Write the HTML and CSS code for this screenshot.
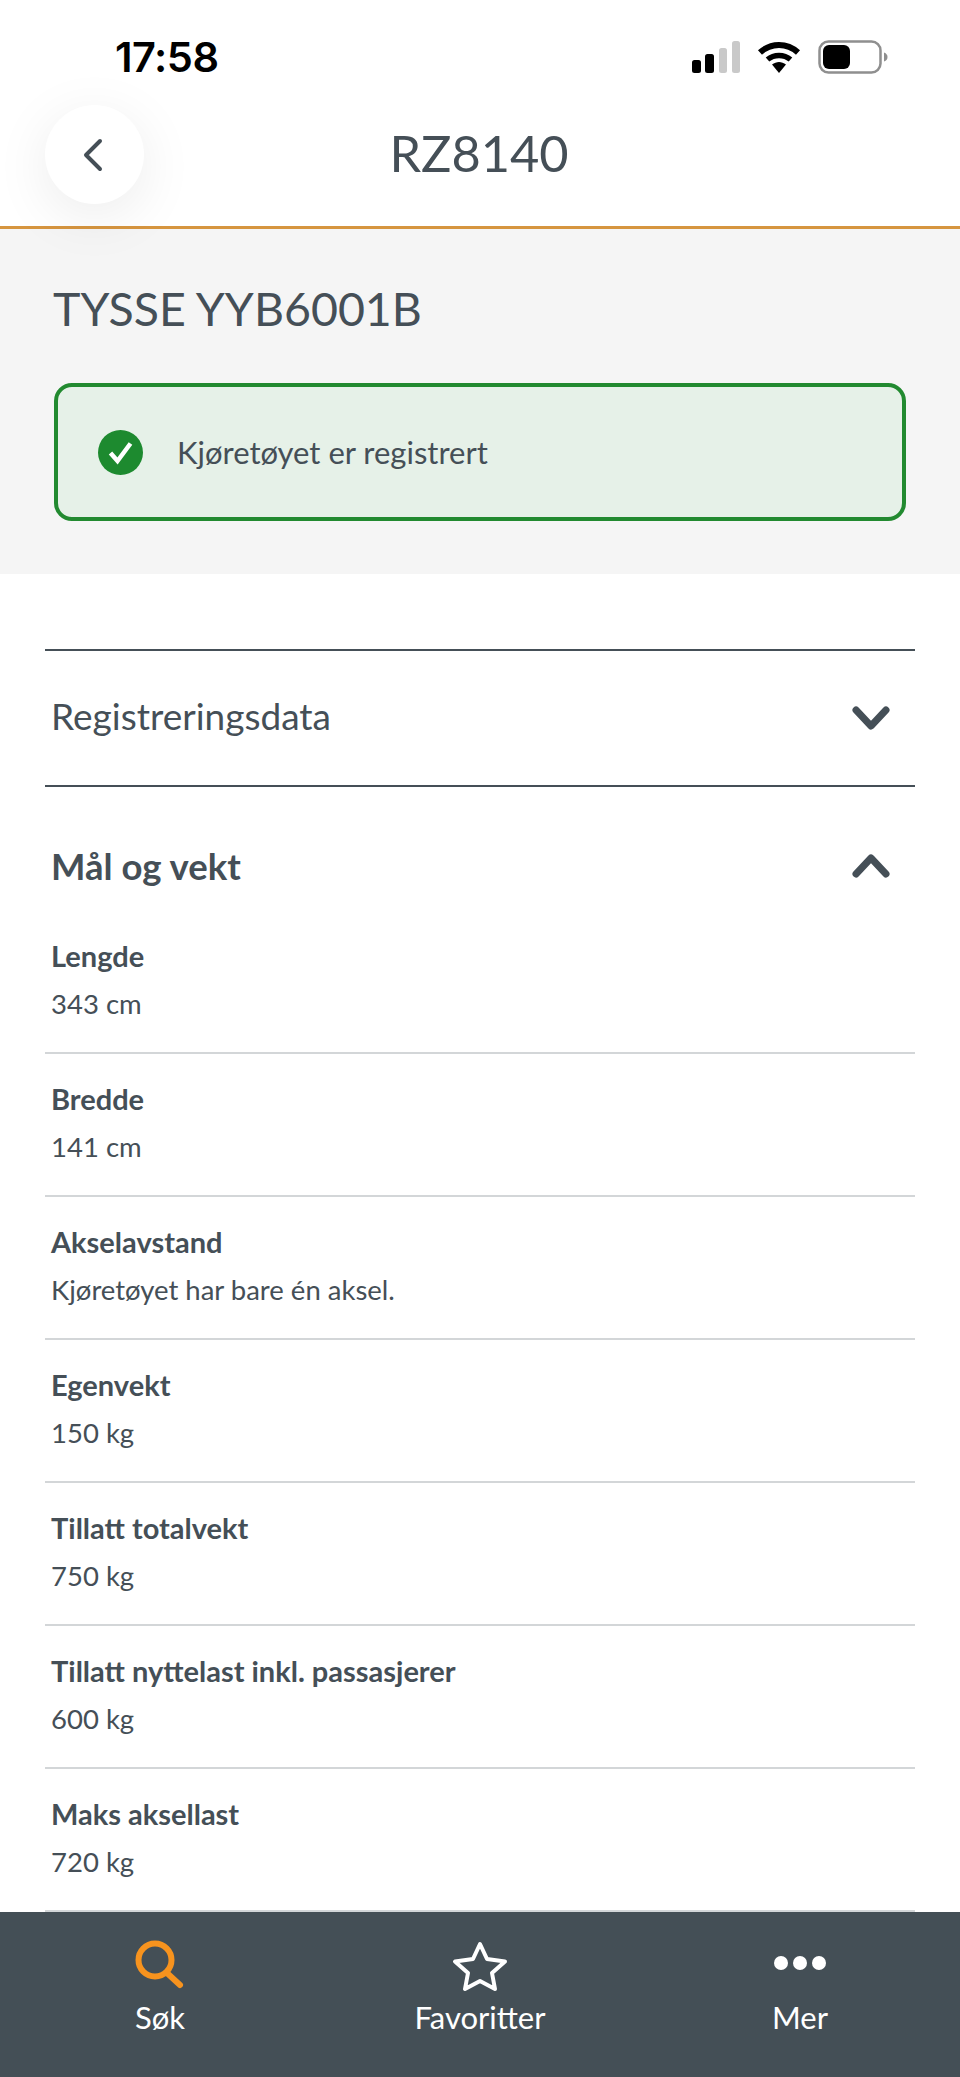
FILE: index.html
```html
<!DOCTYPE html>
<html lang="nb">
<head>
    <meta charset="UTF-8">
    <meta name="viewport" content="width=device-width, initial-scale=1.0">
    <title>RZ8140</title>
    <link rel="stylesheet" href="styles.css">
</head>
<body>
    <header class="top">
        <div class="status-bar">
            <span class="clock">17:58</span>
            <div class="status-icons">
                <svg class="signal" width="48" height="32" viewBox="0 0 48 32">
                    <rect x="0" y="19" width="9" height="13" rx="2.5" fill="#000"/>
                    <rect x="13" y="13" width="9" height="19" rx="2.5" fill="#000"/>
                    <rect x="27" y="7" width="8" height="25" rx="2.5" fill="#c9c9c9"/>
                    <rect x="40" y="0" width="8" height="32" rx="2.5" fill="#c9c9c9"/>
                </svg>
                <svg class="wifi" width="44" height="32" viewBox="0 0 44 32">
                    <path d="M3 11.5C14 1.500 30 1.500 41 11.500" fill="none" stroke="#000" stroke-width="6" stroke-linecap="butt"/>
                    <path d="M10.500 18.500C17 13 27 13 33.500 18.500" fill="none" stroke="#000" stroke-width="5.500"/>
                    <path d="M15 23.500C19.500 20 24.500 20 29 23.500L22 32Z" fill="#000"/>
                </svg>
                <svg class="battery" width="70" height="34" viewBox="0 0 70 34">
                    <rect x="1.500" y="1.500" width="61" height="31" rx="9" fill="none" stroke="#8f8f8f" stroke-width="2.500"/>
                    <rect x="5" y="5" width="27" height="24" rx="6" fill="#000"/>
                    <path d="M66 12.500C68.500 13.500 69.500 15 69.500 17C69.500 19 68.500 20.500 66 21.500Z" fill="#8f8f8f"/>
                </svg>
            </div>
        </div>
        <div class="title-row">
            <button class="back-btn" aria-label="Tilbake">
                <svg width="24" height="36" viewBox="0 0 24 36">
                    <path d="M20 4L6 18L20 32" fill="none" stroke="#454f57" stroke-width="4" stroke-linecap="round" stroke-linejoin="round"/>
                </svg>
            </button>
            <h1 class="plate">RZ8140</h1>
        </div>
    </header>

    <section class="vehicle">
        <h2 class="vehicle-name">TYSSE YYB6001B</h2>
        <div class="notice">
            <svg class="notice-icon" width="45" height="45" viewBox="0 0 45 45">
                <circle cx="22.500" cy="22.500" r="22.500" fill="#1d8a2f"/>
                <path d="M12.500 23L19.500 31L32.500 13.500" fill="none" stroke="#fff" stroke-width="4.500"/>
            </svg>
            <span>Kjøretøyet er registrert</span>
        </div>
    </section>

    <main class="details">
        <div class="accordion-head closed">
            <span>Registreringsdata</span>
            <svg width="38" height="24" viewBox="0 0 38 24">
                <path d="M4 4L19 20L34 4" fill="none" stroke="#454f57" stroke-width="7" stroke-linecap="round" stroke-linejoin="round"/>
            </svg>
        </div>
        <div class="accordion-head open">
            <span>Mål og vekt</span>
            <svg width="38" height="24" viewBox="0 0 38 24">
                <path d="M4 20L19 4L34 20" fill="none" stroke="#454f57" stroke-width="7" stroke-linecap="round" stroke-linejoin="round"/>
            </svg>
        </div>
        <div class="row"><div class="row-label">Lengde</div><div class="row-value">343 cm</div></div>
        <div class="row"><div class="row-label">Bredde</div><div class="row-value">141 cm</div></div>
        <div class="row"><div class="row-label">Akselavstand</div><div class="row-value">Kjøretøyet har bare én aksel.</div></div>
        <div class="row"><div class="row-label">Egenvekt</div><div class="row-value">150 kg</div></div>
        <div class="row"><div class="row-label">Tillatt totalvekt</div><div class="row-value">750 kg</div></div>
        <div class="row"><div class="row-label">Tillatt nyttelast inkl. passasjerer</div><div class="row-value">600 kg</div></div>
        <div class="row"><div class="row-label">Maks aksellast</div><div class="row-value">720 kg</div></div>
    </main>

    <nav class="tabbar">
        <div class="tab active">
            <svg width="60" height="52" viewBox="0 0 60 52">
                <circle cx="25" cy="20" r="16.500" fill="none" stroke="#f7931e" stroke-width="6"/>
                <path d="M37 33L50 45" fill="none" stroke="#f7931e" stroke-width="6" stroke-linecap="round"/>
            </svg>
            <span>Søk</span>
        </div>
        <div class="tab">
            <svg width="60" height="52" viewBox="0 0 60 52">
                <path d="M30 4L37 19L55 21.500L42 33L45 49L30 41L15 49L18 33L5 21.500L23 19Z" fill="none" stroke="#fff" stroke-width="4" stroke-linejoin="round"/>
            </svg>
            <span>Favoritter</span>
        </div>
        <div class="tab">
            <svg width="60" height="52" viewBox="0 0 60 52">
                <circle cx="11" cy="23" r="7" fill="#fff"/>
                <circle cx="30" cy="23" r="7" fill="#fff"/>
                <circle cx="49" cy="23" r="7" fill="#fff"/>
            </svg>
            <span>Mer</span>
        </div>
    </nav>
</body>
</html>
```

FILE: styles.css
```css
* {
    box-sizing: border-box;
}
html, body {
    margin: 0;
    height: 100%;
}
body {
    display: flex;
    flex-direction: column;
    height: 2077px;
    overflow: hidden;
    background-color: #ffffff;
    color: #454f57;
    font-family: Lato, 'Noto Sans', sans-serif;
}
h1, h2 {
    margin: 0;
    font-weight: 400;
}
.top {
    position: relative;
    z-index: 2;
    height: 229px;
    background-color: #ffffff;
    border-bottom: 3px solid #d6953f;
}
.status-bar {
    display: flex;
    justify-content: space-between;
    align-items: center;
    height: 100px;
    padding: 14px 72px 0 115px;
}
.clock {
    color: #000000;
    font-family: Inter, sans-serif;
    font-size: 41.5px;
    font-weight: 600;
    letter-spacing: -0.5px;
}
.status-icons {
    display: flex;
    align-items: center;
    gap: 17px;
}
.title-row {
    display: grid;
    grid-template-columns: 1fr auto 1fr;
    align-items: center;
    margin-top: 5px;
    padding-left: 45px;
}
.back-btn {
    display: flex;
    align-items: center;
    justify-content: center;
    width: 99px;
    height: 99px;
    padding: 0 6px 0 0;
    border: none;
    border-radius: 50%;
    background-color: #ffffff;
    box-shadow: 0 12px 56px rgba(0,0,0,0.08);
}
.plate {
    font-size: 50.5px;
    line-height: 60px;
    margin-left: -47px;
    margin-top: -4px;
}
.vehicle {
    height: 345px;
    padding: 50px 54px 0;
    background-color: #f5f5f5;
}
.vehicle-name {
    margin-left: -1px;
    font-size: 46.5px;
    line-height: 58px;
}
.notice {
    display: flex;
    align-items: center;
    gap: 34px;
    height: 138px;
    margin-top: 46px;
    padding-left: 40px;
    border: 4px solid #228a30;
    border-radius: 18px;
    background-color: #e6f1e8;
    font-size: 31px;
}
.details {
    flex: 1;
    margin: 75px 45px 0;
    overflow: hidden;
}
.accordion-head {
    display: flex;
    justify-content: space-between;
    align-items: center;
    padding: 0 25px 0 6px;
    font-size: 37px;
}
.accordion-head.closed {
    height: 138px;
    border-top: 2px solid #454f57;
    border-bottom: 2px solid #454f57;
}
.accordion-head.closed span {
    margin-bottom: 5px;
}
.accordion-head.open {
    height: 124px;
    padding-top: 34px;
    font-size: 36.5px;
    font-weight: 700;
}
.row {
    height: 143px;
    padding: 25px 6px 0;
    border-bottom: 2px solid #d3d6d8;
}
.row-label {
    font-size: 29px;
    font-weight: 700;
    line-height: 40px;
}
.row-value {
    margin-top: 8px;
    font-size: 27.5px;
    line-height: 40px;
}
.tabbar {
    display: flex;
    flex-shrink: 0;
    height: 165px;
    padding-top: 28px;
    background-color: #444f56;
    color: #ffffff;
}
.tab {
    display: flex;
    flex: 1;
    flex-direction: column;
    align-items: center;
    font-size: 31px;
    line-height: 40px;
}
.tab span {
    margin-top: 5px;
}
```
